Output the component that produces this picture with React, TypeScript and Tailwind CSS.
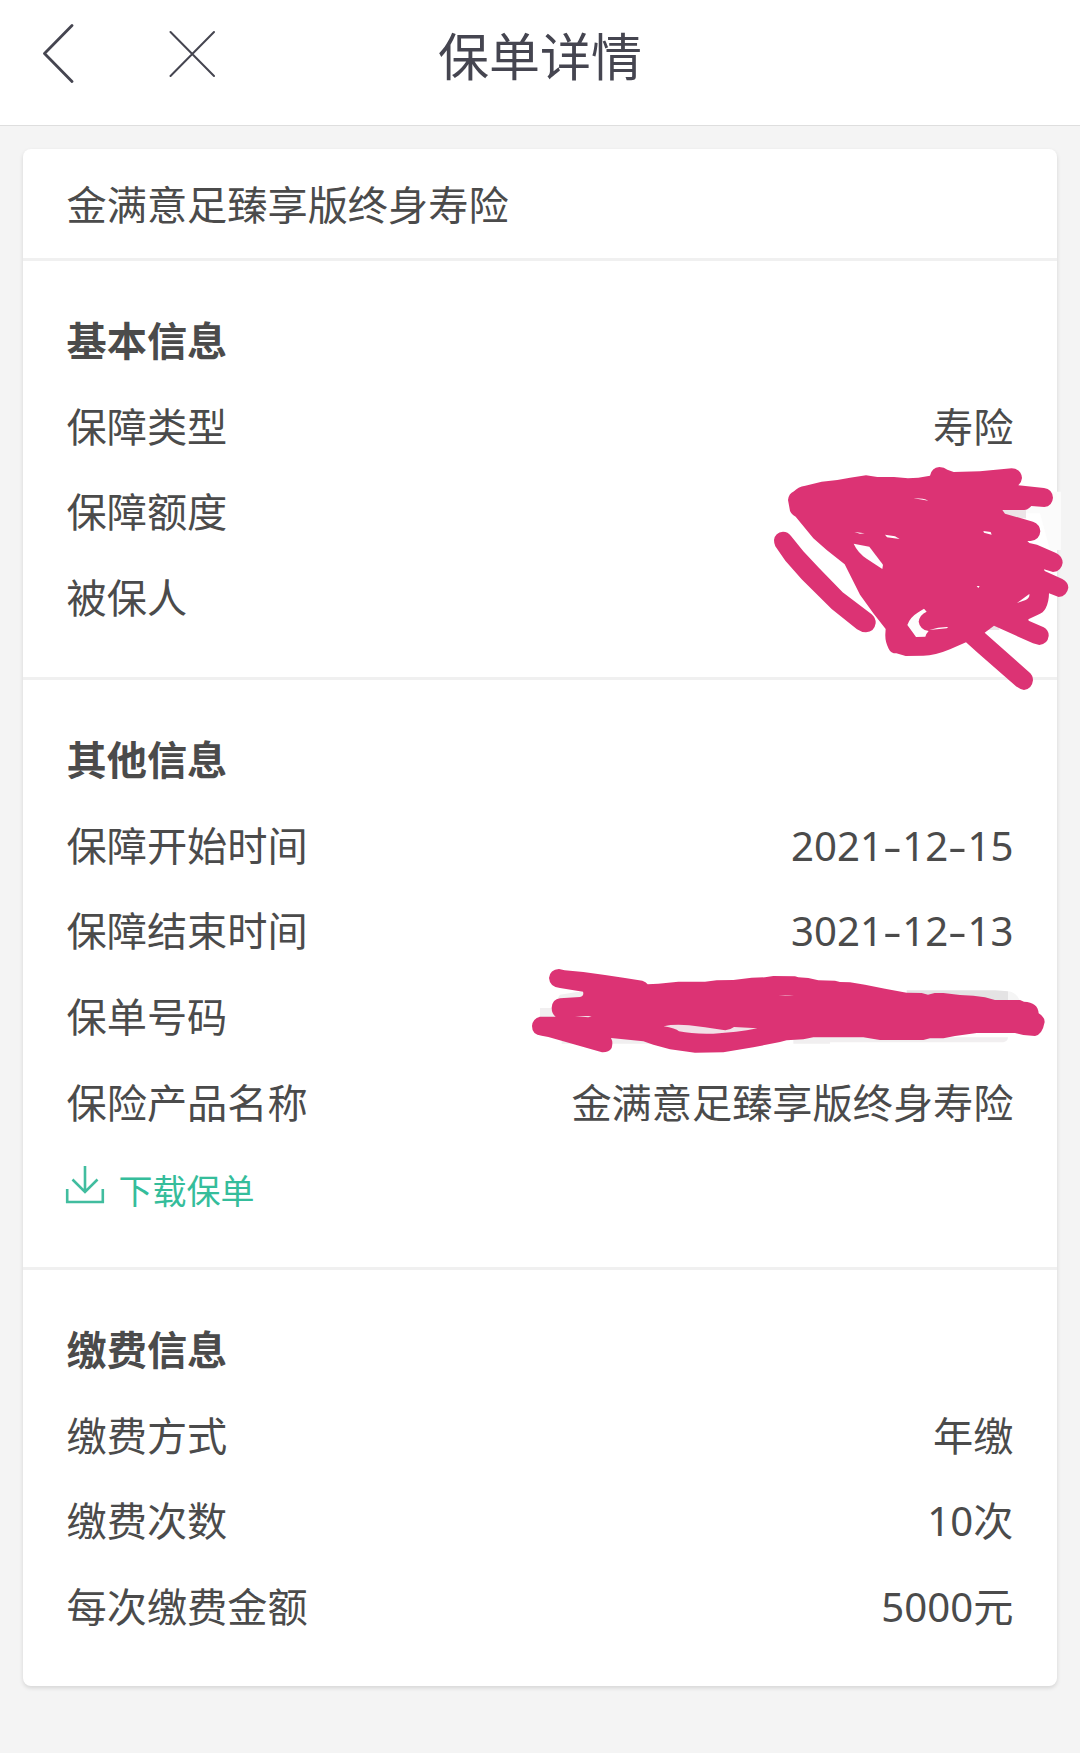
import { ReactNode } from 'react';

const formatDate = (date: string) =>
  date.split('-').map((part, i) => (
    <span key={i}>
      {i > 0 && <span className="inline-block scale-x-[1.45] mx-[3.2px]">-</span>}
      {part}
    </span>
  ));

const Row = ({ label, value }: { label: string; value?: ReactNode }) => (
  <div className="h-[85.8px] flex items-center justify-between">
    <span>{label}</span>
    <span>{value}</span>
  </div>
);

const Section = ({ title, children }: { title: string; children: ReactNode }) => (
  <section className="px-[43.5px] pt-[37px] pb-[35.8px] border-t-[3px] border-[#f0f0f0]">
    <h2 className="h-[85.8px] flex items-center font-bold">{title}</h2>
    {children}
  </section>
);

const DownloadIcon = () => (
  <svg className="w-[40px] h-[40px]" viewBox="0 0 40 40" fill="none" stroke="#41bd9f" strokeWidth="2.6">
    <path d="M20 1v26M7.500 14.500L20 27L32.500 14.500" />
    <path d="M2.200 24v13H37.800V24" />
  </svg>
);

/* Marker over amount and insured person */
const AmountScribble = () => (
  <svg className="absolute left-[750px] top-[450px] w-[330px] h-[250px]" viewBox="0 0 990 750">
    <path d="M828 125H933V300H900L870 190H828Z" fill="#fbfbfb" />
    <path d="M755 178H828V205H755ZM700 520H748V540H700Z" fill="#ece4e7" />
    <g fill="#dc3374">
      <path d="M114 150Q116 131 132 124Q143 111 166 107L215 95L262 90L300 83L348 76L382 81L432 81L474 85L505 83L540 77Q545 53 568 51Q583 51 592 59L611 66L690 64L785 55Q814 57 816 84Q815 97 805 106L882 114Q907 118 909 143Q907 168 883 171L844 168Q835 179 823 180L757 180L765 191L849 215Q870 223 871 244Q869 270 842 273L832 273L838 279L861 284L918 309Q937 318 938 338Q935 363 909 366L882 358L884 363L937 387Q955 397 955 413Q951 438 926 441L897 430Q897 455 887 475Q880 489 864 494L835 508L836 512L881 532Q897 541 896 558Q893 582 868 585L849 580L732 527L704 548L836 665Q849 675 849 691Q846 717 822 720Q810 718 798 709L683 608L648 577L600 598Q555 617 520 617L467 618L439 610Q422 610 416 596Q405 576 406 553L407 537L370 490L330 434L284 343L230 300L190 265L137 200Q119 190 119 177Z" />
      <path d="M72 270Q75 247 99 245Q114 245 123 258L160 304L205 352L278 427L365 493Q378 504 377 520Q373 546 348 547Q334 547 321 538L245 477L155 388L106 332L76 289Q72 281 72 270Z" />
    </g>
    <g fill="#fdfdfd">
      <path d="M311 281L358 290L399 344L397 357L350 326Q323 308 311 281Z" />
      <path d="M405 254L435 259L449 267L411 262ZM491 145Q518 144 535 152Q514 149 491 145ZM313 246L344 250L330 251ZM700 243L722 246L725 254L702 248ZM801 459L838 432Q840 442 827 450ZM680 408H689L685 414Z" />
      <path d="M472 525Q480 502 505 487L522 476L530 485Q509 494 506 515Q509 538 536 543L529 552L526 560L498 561L489 548ZM538 540Q567 530 595 531L590 535Z" />
    </g>
  </svg>
);

/* Marker over policy number */
const NumberScribble = () => (
  <svg className="absolute left-[510px] top-[950px] w-[570px] h-[120px]" viewBox="0 0 1710 360">
    <path d="M90 174H125L150 134L200 126L225 125V210H90ZM155 262H430V281H155ZM850 262H1494Q1494 274 1480 277H960V281H850Z" fill="#f1eff0" />
    <path d="M1190 121H1455L1494 124V160H1190Z" fill="#e4e3e4" />
    <path d="M1494 124Q1518 126 1530 152H1494Z" fill="#f5f5f5" />
    <path fill="#dc3374" d="M117 84Q120 58 147 57L164 61L220 66L285 75L345 84L397 92Q408 95 413 103L445 101L505 95L585 95L620 91L670 90L725 83L765 82L790 78L855 79L865 82L895 84L925 91L975 92L990 96L1020 97L1065 104L1125 116L1190 128L1235 129L1254 134L1274 129L1300 129L1350 135L1390 137L1425 142L1455 150L1530 150L1542 155Q1584 157 1586 190Q1604 200 1604 216Q1597 254 1575 258L1540 255L1515 249L1400 249L1335 258L1300 265L1260 265L1240 270H1110L1060 262H910L880 268L830 271L810 276L730 292L640 307L555 308L480 298L430 284L400 274L303 264Q310 276 305 294Q296 308 276 307L115 261L95 257Q66 255 66 228Q68 205 90 200L137 200Q125 191 125 173Q127 148 150 145L210 141Q223 137 219 125L150 114Q119 111 117 84Z" />
    <path fill="#f2e0e7" d="M461 229Q490 222 537 226L585 232L635 239Q655 244 672 231L742 235Q680 248 610 251Q550 253 507 244Q497 235 461 229ZM195 198H245L235 202ZM805 136Q830 133 852 137Z" />
  </svg>
);

export default function App() {
  return (
    <div
      lang="zh-CN"
      className="relative w-[1080px] h-[1753px] overflow-hidden bg-[#f4f4f4] text-[#4b4b4b] text-[40.2px] leading-none font-['Noto_Sans','Noto_Sans_CJK_SC',sans-serif]"
    >
      <header className="h-[126px] bg-white border-b border-[#dedede] grid grid-cols-3 items-center text-[#454550]">
        <div className="flex items-center gap-[92px] pl-[41px] pb-[18px]">
          <svg className="w-[34px] h-[60px]" viewBox="0 0 34 60" fill="none" stroke="currentColor" strokeWidth="2.8">
            <path d="M31 1.500L3.500 29.500L31 57.500" strokeLinecap="round" strokeLinejoin="round" />
          </svg>
          <svg className="w-[48px] h-[48px]" viewBox="0 0 48 48" fill="none" stroke="currentColor" strokeWidth="2">
            <path d="M3.500 2L47 46M47 2L3.500 46" strokeLinecap="round" />
          </svg>
        </div>
        <h1 className="text-center text-[51px] pb-[13px]">保单详情</h1>
      </header>

      <main className="mt-[23px] mx-[23px] h-[1537px] bg-white rounded-[8px] shadow-[0_2px_4px_rgba(0,0,0,0.13)]">
        <div className="h-[109px] px-[43.5px] pt-1 flex items-center">金满意足臻享版终身寿险</div>

        <Section title="基本信息">
          <Row label="保障类型" value="寿险" />
          <Row label="保障额度" />
          <Row label="被保人" />
        </Section>

        <Section title="其他信息">
          <Row label="保障开始时间" value={formatDate('2021-12-15')} />
          <Row label="保障结束时间" value={formatDate('3021-12-13')} />
          <Row label="保单号码" />
          <Row label="保险产品名称" value="金满意足臻享版终身寿险" />
          <button className="h-[85.2px] -ml-[2px] flex items-center gap-[14px] text-[34px] text-[#35bd9b]">
            <span className="pb-2">
              <DownloadIcon />
            </span>
            <span className="pt-1">下载保单</span>
          </button>
        </Section>

        <Section title="缴费信息">
          <Row label="缴费方式" value="年缴" />
          <Row label="缴费次数" value="10次" />
          <Row label="每次缴费金额" value="5000元" />
        </Section>
      </main>

      <AmountScribble />
      <NumberScribble />
    </div>
  );
}
